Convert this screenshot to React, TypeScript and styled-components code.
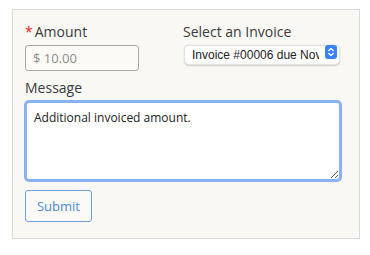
import styled, { createGlobalStyle } from "styled-components";
import { useEffect, useRef } from "react";

const GlobalStyle = createGlobalStyle`
  body {
    margin: 0;
    background: #ffffff;
    font-family: "Open Sans", "Liberation Sans", sans-serif;
  }
`;

const Panel = styled.form`
  box-sizing: border-box;
  margin: 9px 0 0 12px;
  width: 348px;
  height: 230px;
  padding: 12px 17px 0 12px;
  background: #f9f8f5;
  border: 1px solid #dadada;
  display: flex;
  flex-direction: column;
`;

const Row = styled.div`
  display: grid;
  grid-template-columns: 114px 156px;
  column-gap: 44px;
`;

const Field = styled.div<{ $shift?: number }>`
  display: flex;
  flex-direction: column;
  margin-left: ${(p) => p.$shift ?? 0}px;
`;

const Label = styled.label<{ $gap?: number }>`
  display: block;
  font-size: 14px;
  line-height: 20px;
  color: #3a3a3a;
  margin-bottom: ${(p) => p.$gap ?? 3}px;
`;

const Required = styled.span`
  color: #e8261b;
  margin-right: 2px;
`;

const AmountInput = styled.input`
  box-sizing: border-box;
  width: 114px;
  height: 26px;
  padding: 0 7px;
  border: 1px solid #a9a9a9;
  border-radius: 3px;
  background: #fbfaf7;
  font-family: "Open Sans", sans-serif;
  font-size: 13px;
  color: #333;
  outline: none;

  &::placeholder {
    color: #8e8e8e;
  }
`;

const SelectWrap = styled.div`
  position: relative;
  width: 156px;
  margin-left: 1px;
`;

const Select = styled.select`
  appearance: none;
  box-sizing: border-box;
  width: 156px;
  height: 20px;
  padding: 0 20px 0 7px;
  border: 1px solid #e3e3e3;
  border-radius: 5px;
  background: #ffffff;
  box-shadow: 0 0.5px 1.5px rgba(0, 0, 0, 0.18);
  font-family: "Liberation Sans", Arial, sans-serif;
  font-size: 12px;
  color: #222;
  outline: none;
`;

const Stepper = styled.span`
  position: absolute;
  right: 3px;
  top: 3px;
  width: 12px;
  height: 14px;
  border-radius: 3px;
  background: #3b82f6;
  display: flex;
  align-items: center;
  justify-content: center;
  pointer-events: none;
`;

const MessageArea = styled.textarea`
  box-sizing: border-box;
  width: 318px;
  height: 82px;
  margin-left: -1px;
  padding: 6px 7px;
  border: 3px solid #8ab2f2;
  border-radius: 5px;
  background: #ffffff;
  font-family: "Open Sans", sans-serif;
  font-size: 12px;
  line-height: 17px;
  color: #222;
  caret-color: #222;
  outline: none;
  resize: both;
`;

const SubmitButton = styled.button`
  box-sizing: border-box;
  width: 67px;
  height: 32px;
  margin-top: 8px;
  border: 1px solid #6ea1e4;
  border-radius: 3px;
  background: #fbfaf7;
  color: #4a8ade;
  font-family: "Open Sans", sans-serif;
  font-size: 13px;
  cursor: pointer;
`;

export default function App() {
  const areaRef = useRef<HTMLTextAreaElement>(null);

  useEffect(() => {
    const el = areaRef.current;
    if (el) {
      el.focus();
      el.setSelectionRange(el.value.length, el.value.length);
    }
  }, []);

  return (
    <>
      <GlobalStyle />
      <Panel onSubmit={(e) => e.preventDefault()}>
        <Row>
          <Field>
            <Label>
              <Required>*</Required>Amount
            </Label>
            <AmountInput placeholder="$ 10.00" />
          </Field>
          <Field $shift={0}>
            <Label $gap={0}>Select an Invoice</Label>
            <SelectWrap>
              <Select defaultValue="6">
                <option value="6">Invoice #00006 due Nov 30, 2024</option>
                <option value="5">Invoice #00005 due Oct 31, 2024</option>
              </Select>
              <Stepper>
                <svg width="8" height="10" viewBox="0 0 8 10" fill="none">
                  <path
                    d="M1.8 3.6 L4 1.6 L6.2 3.6 M1.8 6.4 L4 8.4 L6.2 6.4"
                    stroke="#fff"
                    strokeWidth="1.3"
                    strokeLinecap="round"
                    strokeLinejoin="round"
                  />
                </svg>
              </Stepper>
            </SelectWrap>
          </Field>
        </Row>
        <Field style={{ marginTop: 7 }}>
          <Label $gap={2}>Message</Label>
          <MessageArea
            ref={areaRef}
            defaultValue="Additional invoiced amount."
          />
        </Field>
        <div>
          <SubmitButton type="submit">Submit</SubmitButton>
        </div>
      </Panel>
    </>
  );
}
